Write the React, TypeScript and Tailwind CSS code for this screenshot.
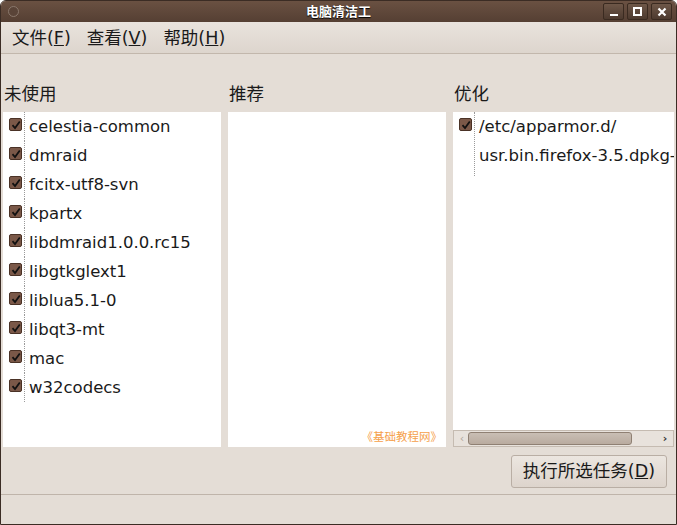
import React from 'react';

const unused = [
  'celestia-common',
  'dmraid',
  'fcitx-utf8-svn',
  'kpartx',
  'libdmraid1.0.0.rc15',
  'libgtkglext1',
  'liblua5.1-0',
  'libqt3-mt',
  'mac',
  'w32codecs',
];

const font = { fontFamily: '"DejaVu Sans", "Noto Sans CJK SC", sans-serif' };

function Check() {
  return (
    <span className="mt-[6px] flex h-[13px] w-[13px] shrink-0 items-center justify-center rounded-[2px] border border-[#4a3226] bg-[#7a5848]">
      <svg width="10" height="10" viewBox="0 0 10 10">
        <path d="M1.5 5.2 L4 8 L8.8 1.5" stroke="#111" strokeWidth="1.8" fill="none" />
      </svg>
    </span>
  );
}

function Row({ children }: { children: React.ReactNode }) {
  return (
    <div className="flex items-start">
      <div className="flex w-[19px] shrink-0 justify-end">
        <Check />
      </div>
      <div className="ml-[2px] border-l border-dotted border-[#9a9a9a] pl-[4px] text-[16.5px] leading-[29px] text-[#1a1a1a] whitespace-nowrap">
        {children}
      </div>
    </div>
  );
}

function WinBtn({ children }: { children: React.ReactNode }) {
  return (
    <div className="flex h-[17px] w-[21px] items-center justify-center rounded-[2px] border border-[#3a2a20] bg-gradient-to-b from-[#6e5748] to-[#4d3a2f] text-white">
      {children}
    </div>
  );
}

export default function App() {
  return (
    <div
      className="flex h-[525px] w-[677px] flex-col overflow-hidden rounded-t-[6px] border border-[#3b2c24] bg-[#e4ddd6]"
      style={font}
    >
      {/* title bar */}
      <div className="relative flex h-[21px] shrink-0 items-center bg-gradient-to-b from-[#6a5142] to-[#553f33]">
        <span className="ml-[7px] h-[11px] w-[11px] rounded-full border border-[#8a786c] bg-[#5a4438]" />
        <span className="absolute left-0 right-0 text-center text-[13px] font-bold text-white [text-shadow:0_1px_1px_#000]">
          电脑清洁工
        </span>
        <div className="ml-auto mr-[4px] flex gap-[3px]">
          <WinBtn>
            <span className="mt-[6px] h-[2px] w-[8px] bg-white" />
          </WinBtn>
          <WinBtn>
            <span className="h-[9px] w-[9px] border-2 border-white" />
          </WinBtn>
          <WinBtn>
            <svg width="10" height="10" viewBox="0 0 10 10">
              <path d="M1.5 1.5 L8.5 8.5 M8.5 1.5 L1.5 8.5" stroke="white" strokeWidth="2.2" />
            </svg>
          </WinBtn>
        </div>
      </div>

      {/* menu bar */}
      <div className="flex h-[32px] shrink-0 items-center gap-[16px] border-b border-[#c2b7ac] bg-gradient-to-b from-[#e9e3dd] to-[#ddd5cd] pl-[11px] pt-[2px] text-[17.5px] text-[#1a1a1a]">
        <span>文件(<span className="underline">F</span>)</span>
        <span>查看(<span className="underline">V</span>)</span>
        <span>帮助(<span className="underline">H</span>)</span>
      </div>

      {/* columns */}
      <div className="mt-[28px] grid grid-cols-[218px_218px_221px] gap-x-[7px] px-[2px]">
        <div className="pl-[1px] text-[17.5px] leading-[24px] text-[#1a1a1a]">未使用</div>
        <div className="pl-[1px] text-[17.5px] leading-[24px] text-[#1a1a1a]">推荐</div>
        <div className="pl-[1px] text-[17.5px] leading-[24px] text-[#1a1a1a]">优化</div>

        <div className="mt-[6px] h-[335px] bg-white">
          {unused.map((n) => (
            <Row key={n}>{n}</Row>
          ))}
        </div>
        <div className="relative mt-[6px] h-[335px] bg-white">
          <span className="absolute bottom-[1px] right-[4px] text-[11.5px] text-[#f5a04a]">《基础教程网》</span>
        </div>
        <div className="mt-[6px] flex h-[335px] flex-col overflow-hidden bg-white">
          <div className="flex-1 overflow-hidden">
            <div className="flex items-start">
              <div className="flex w-[19px] shrink-0 justify-end">
                <Check />
              </div>
              <div className="ml-[2px] shrink-0 border-l border-dotted border-[#9a9a9a] pl-[4px] pb-[6px] text-[16.5px] leading-[29px] text-[#1a1a1a] whitespace-nowrap">
                /etc/apparmor.d/
                <br />
                usr.bin.firefox-3.5.dpkg-dist
              </div>
            </div>
          </div>
          <div className="flex h-[17px] shrink-0 items-center border border-[#c5bbb1] bg-[#e8e2dc] px-[2px]">
            <span className="w-[12px] text-center text-[11px] leading-none text-[#b0a69d]">‹</span>
            <div className="h-[13px] w-[164px] rounded-[3px] border border-[#8f8073] bg-gradient-to-b from-[#c9beb4] to-[#b9ab9f]" />
            <span className="ml-auto w-[12px] text-center text-[11px] font-bold leading-none text-[#333]">›</span>
          </div>
        </div>
      </div>

      {/* action */}
      <div className="mt-[8px] flex justify-end pr-[9px]">
        <button className="h-[33px] rounded-[3px] border border-[#b9aea4] bg-gradient-to-b from-[#ece6e0] to-[#ddd4cc] px-[11px] text-[17.5px] text-[#1a1a1a]">
          执行所选任务(<span className="underline">D</span>)
        </button>
      </div>

      {/* status bar */}
      <div className="mt-[6px] flex-1 border-t border-[#bfb4aa]" />
    </div>
  );
}
